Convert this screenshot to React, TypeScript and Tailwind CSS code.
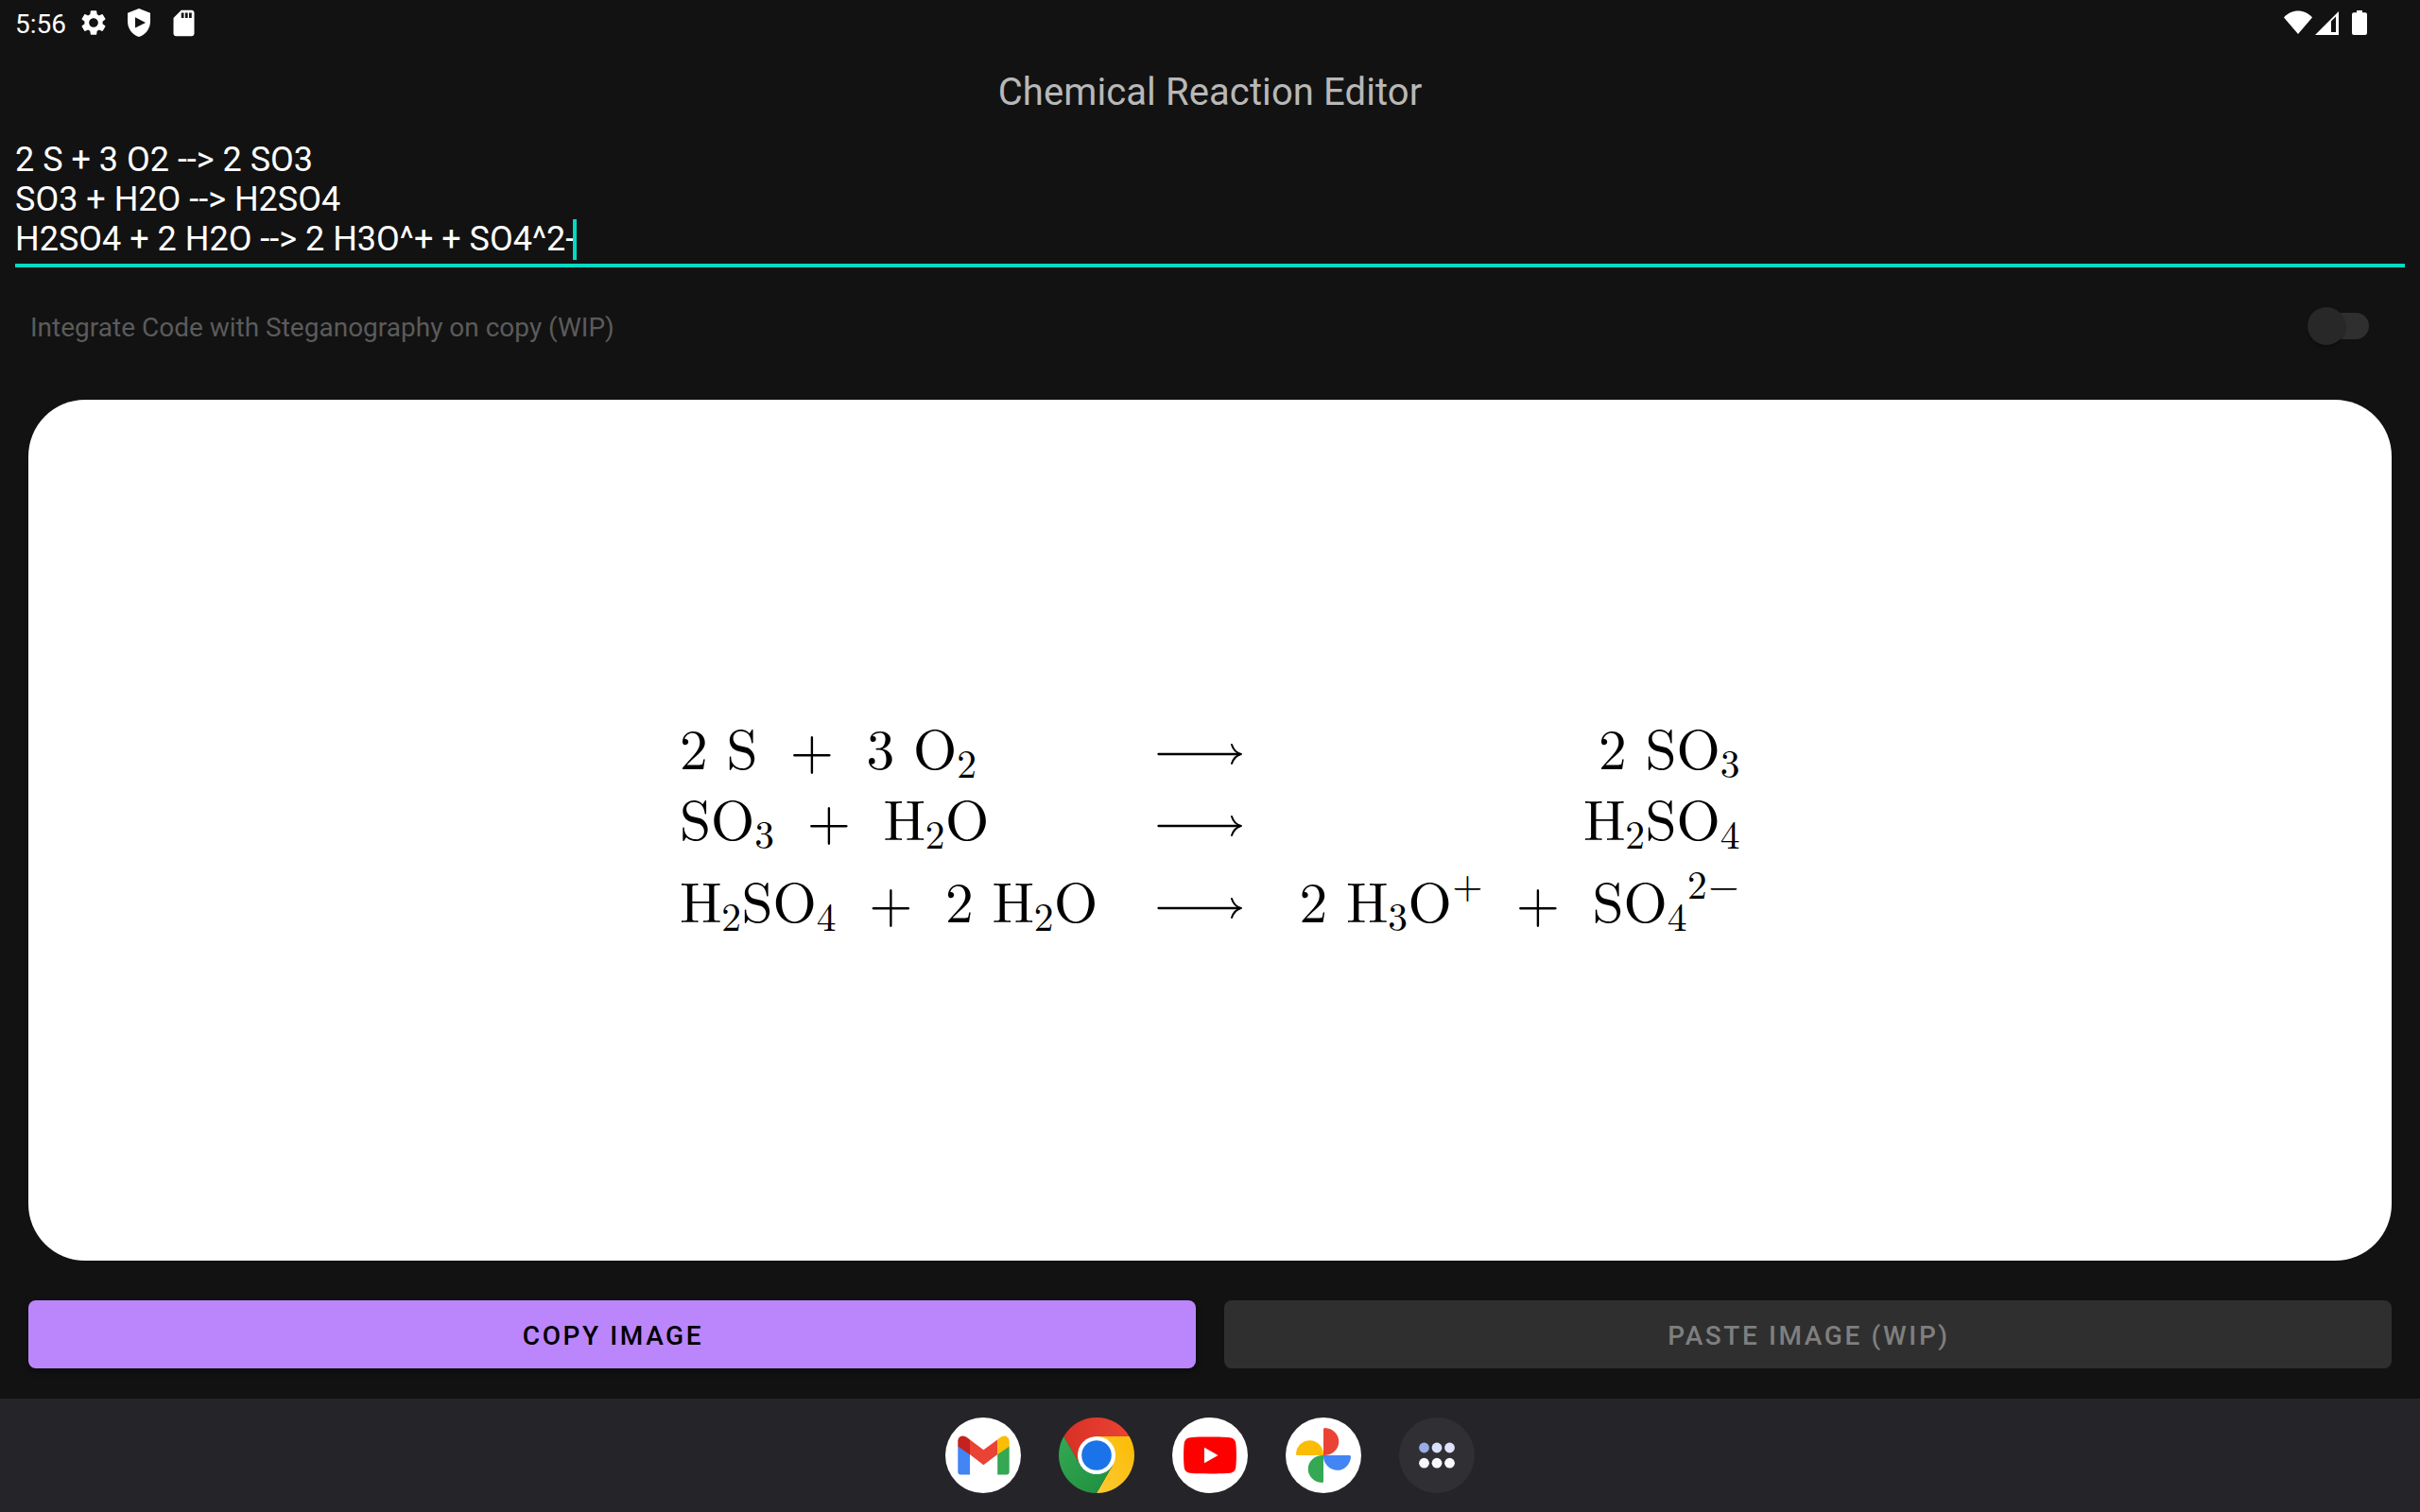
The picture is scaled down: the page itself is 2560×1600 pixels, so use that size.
import React from "react";
import { MdSettings, MdSdCard } from "react-icons/md";

const H = () => <span className="inline-block w-[44px] text-center">H</span>;
const O = () => <span className="inline-block w-[46px] text-center">O</span>;
const S = () => <span className="inline-block w-[33px] text-center">S</span>;
const Num = ({ children }: { children: string }) => (
  <span className="mr-[20px] inline-block w-[29.5px] text-center">{children}</span>
);
const Sub = ({ children }: { children: string }) => (
  <span className="relative top-[9px] inline-block w-[21.5px] text-center text-[41.5px] leading-none">{children}</span>
);
const Plus = () => <span className="mx-[34.5px] inline-flex w-[46px] justify-center">+</span>;

const Arrow = () => (
  <svg className="mt-[19px] h-[24px] w-[90px]" viewBox="0 0 90 24" fill="none" stroke="#000" strokeWidth="2.3" strokeLinecap="round">
    <path d="M1.5 12H88" />
    <path d="M79 2C80.5 7 84 10.5 88.5 12C84 13.5 80.5 17 79 22" strokeWidth="2" />
  </svg>
);

const Row = ({ left, right, className }: { left: React.ReactNode; right: React.ReactNode; className: string }) => (
  <div className={"flex items-center justify-between whitespace-nowrap " + className}>
    <div className="flex h-[72px] w-[504px] items-baseline">{left}</div>
    <Arrow />
    <div className="flex h-[72px] w-[527px] items-baseline justify-end">{right}</div>
  </div>
);

const Gmail = () => (
  <svg viewBox="0 0 80 80" className="size-20">
    <circle cx="40" cy="40" r="40" fill="#fff" />
    <path d="M13.3 30V57.5Q13.3 60.5 16.3 60.5H26V38Z" fill="#4285f4" />
    <path d="M67.7 30V57.5Q67.7 60.5 64.7 60.5H55.2V38Z" fill="#34a853" />
    <path d="M25.8 23.3L40.4 34.3L55.3 23.3V39L40.4 50.2L25.8 39Z" fill="#ea4335" />
    <path d="M13.3 25.5C13.3 19.5 19 17.5 23.5 21.5L26 23.4V39.2L13.3 30.6Z" fill="#c5221f" />
    <path d="M67.7 25.5C67.7 19.5 62 17.5 57.5 21.5L55.2 23.4V39.2L67.7 30.6Z" fill="#fbbc04" />
  </svg>
);

const Chrome = () => (
  <svg viewBox="0 0 80 80" className="size-20">
    <defs>
      <linearGradient id="cr" x1="0" x2="1"><stop stopColor="#d93025" /><stop offset="1" stopColor="#ea4335" /></linearGradient>
      <linearGradient id="cy" x1="1" y1="0" x2="0" y2="1"><stop stopColor="#fbbc04" /><stop offset="1" stopColor="#fcc934" /></linearGradient>
      <linearGradient id="cg" x1="0" y1="0" x2="1" y2="1"><stop stopColor="#34a853" /><stop offset="1" stopColor="#1e8e3e" /></linearGradient>
    </defs>
    <path d="M40 40L57.32 50L40 80A40 40 0 0 0 74.64 20H40Z" fill="url(#cy)" />
    <path d="M40 40L22.68 50L5.36 20A40 40 0 0 1 74.64 20H40Z" fill="url(#cr)" />
    <path d="M22.68 50L5.36 20A40 40 0 0 0 40 80L57.32 50L40 50Z" fill="url(#cg)" />
    <circle cx="40" cy="40" r="20" fill="#fff" />
    <circle cx="40" cy="40" r="15.8" fill="#1a73e8" />
  </svg>
);

const YouTube = () => (
  <svg viewBox="0 0 80 80" className="size-20">
    <circle cx="40" cy="40" r="40" fill="#fff" />
    <path d="M40 20.5C50 20.5 57 20.7 61 21.2C65 21.8 67 24 67.4 28C68.1 35 68.1 45 67.4 52C67 56 65 58.2 61 58.7C53 59.6 27 59.6 19 58.7C15 58.2 13 56 12.6 52C11.9 45 11.9 35 12.6 28C13 24 15 21.8 19 21.2C23 20.7 30 20.5 40 20.5Z" fill="#f00" />
    <path d="M34 31.8L48.6 40L34 48.2Z" fill="#fff" />
  </svg>
);

const Photos = () => (
  <svg viewBox="0 0 80 80" className="size-20">
    <circle cx="40" cy="40" r="40" fill="#fff" />
    <path d="M40 40V12.5Q40 11 41.5 11A15.5 14.5 0 0 1 40 40Z" fill="#ea4335" />
    <path d="M40 40H67.5Q69 40 69 41.5A14.5 15 0 0 1 40 40Z" fill="#4285f4" />
    <path d="M40 40V67.5Q40 69 38.5 69A15.5 14.5 0 0 1 40 40Z" fill="#34a853" />
    <path d="M40 40H12.5Q11 40 11 38.5A14.5 15 0 0 1 40 40Z" fill="#fbbc04" />
  </svg>
);

const AllApps = () => (
  <svg viewBox="0 0 80 80" className="size-20">
    <circle cx="40" cy="40" r="40" fill="#303034" />
    <circle cx="26.5" cy="32" r="5.4" fill="#9aace6" />
    <circle cx="40" cy="32" r="5.4" fill="#d9e0fc" />
    <circle cx="53.5" cy="32" r="5.4" fill="#dfe2f8" />
    <circle cx="26.5" cy="48.2" r="5.4" fill="#f8f8ff" />
    <circle cx="40" cy="48.2" r="5.4" fill="#f8f8ff" />
    <circle cx="53.5" cy="48.2" r="5.4" fill="#f8f8ff" />
  </svg>
);

export default function App() {
  return (
    <div className="flex h-[1600px] w-[2560px] flex-col overflow-hidden bg-[#121212] font-['Roboto',sans-serif]">
      <header className="flex h-12 items-center justify-between pl-4 pr-[55px] text-white">
        <div className="flex items-center">
          <span className="w-[67px] pt-[3px] text-[28px] leading-none">5:56</span>
          <MdSettings className="size-[32px]" />
          <svg viewBox="0 0 26 32" className="ml-[19px] h-[32px] w-[26px]">
            <path fillRule="evenodd" fill="#fff" d="M13 1L25 5.7V14.5C25 22 20.5 28.5 13 31C5.5 28.5 1 22 1 14.5V5.7ZM9 10.3V21.5L20 16Z" />
          </svg>
          <MdSdCard className="ml-[18px] size-[33px]" />
        </div>
        <svg viewBox="0 0 92 32" className="h-8 w-[92px]" fill="#fff">
          <path d="M3 10.5C11 1.3 25 1.3 33 10.5L18 28Z" />
          <path fillRule="evenodd" d="M61 4V29H36ZM53 14.5V26H58V9.5Z" />
          <path d="M80 3H86V5.3H89Q91 5.3 91 7.3V27Q91 29 89 29H77Q75 29 75 27V7.3Q75 5.3 77 5.3H80Z" />
        </svg>
      </header>

      <h1 className="mt-[26px] h-[48px] text-center text-[40px] leading-[48px] tracking-[0.1px] text-[#b8b8b8]">
        Chemical Reaction Editor
      </h1>

      <div className="mx-4 mt-[25px] h-[136px] border-b-4 border-[#03dac5] pt-px text-[36px] leading-[42px] text-white">
        <div>2 S + 3 O2 --&gt; 2 SO3</div>
        <div>SO3 + H2O --&gt; H2SO4</div>
        <div className="flex h-[42px] items-center">
          <span>H2SO4 + 2 H2O --&gt; 2 H3O^+ + SO4^2-</span>
          <span className="-ml-[2px] h-[43px] w-1 bg-[#03dac5]" />
        </div>
      </div>

      <div className="mt-[32px] flex h-[60px] items-center justify-between pl-8 pr-[54px]">
        <span className="pt-[4px] text-[28px] leading-none text-[#5b5b5b]">Integrate Code with Steganography on copy (WIP)</span>
        <span className="flex h-7 w-[62px] items-center rounded-full bg-[#2f2f2f]">
          <span className="-ml-[3px] size-10 rounded-full bg-[#282828] shadow-[0_2px_3px_rgba(0,0,0,0.3)]" />
        </span>
      </div>

      <main className="mx-[30px] mt-[48px] flex h-[911px] flex-col rounded-[60px] bg-white px-[689px] pt-[329.5px] font-['Latin_Modern_Roman','Liberation_Serif',serif] text-[59.5px] leading-[72px] text-black">
        <Row
          className="h-[72px]"
          left={<><Num>2</Num><S /><Plus /><Num>3</Num><O /><Sub>2</Sub></>}
          right={<><Num>2</Num><S /><O /><Sub>3</Sub></>}
        />
        <Row
          className="mt-[3.5px] h-[72px]"
          left={<><S /><O /><Sub>3</Sub><Plus /><H /><Sub>2</Sub><O /></>}
          right={<><H /><Sub>2</Sub><S /><O /><Sub>4</Sub></>}
        />
        <Row
          className="mt-[15px] h-[72px]"
          left={<><H /><Sub>2</Sub><S /><O /><Sub>4</Sub><Plus /><Num>2</Num><H /><Sub>2</Sub><O /></>}
          right={
            <>
              <Num>2</Num><H /><Sub>3</Sub><O />
              <span className="relative -top-[25px] inline-flex w-[34px] justify-center text-[41.5px] leading-none">+</span>
              <Plus /><S /><O /><Sub>4</Sub>
              <span className="relative -top-[25px] inline-block w-[21px] text-center text-[41.5px] leading-none">2</span>
              <span className="relative -top-[25px] inline-flex w-[35px] justify-center text-[41.5px] leading-none">−</span>
            </>
          }
        />
      </main>

      <div className="mx-[30px] mt-[42px] flex h-[72px] gap-[30px] text-[28px] font-medium tracking-[2.6px]">
        <button className="flex-1 rounded-lg bg-[#bb86fc] pl-[2px] pt-[4px] text-black shadow-[0_3px_6px_rgba(0,0,0,0.4)]">COPY IMAGE</button>
        <button className="flex-1 rounded-lg bg-[#2f2f2f] pl-[2px] pt-[4px] text-[#7f7f7f]">PASTE IMAGE (WIP)</button>
      </div>

      <nav className="mt-8 flex h-[120px] items-center justify-center gap-10 bg-[#252529]">
        <Gmail />
        <Chrome />
        <YouTube />
        <Photos />
        <AllApps />
      </nav>
    </div>
  );
}
